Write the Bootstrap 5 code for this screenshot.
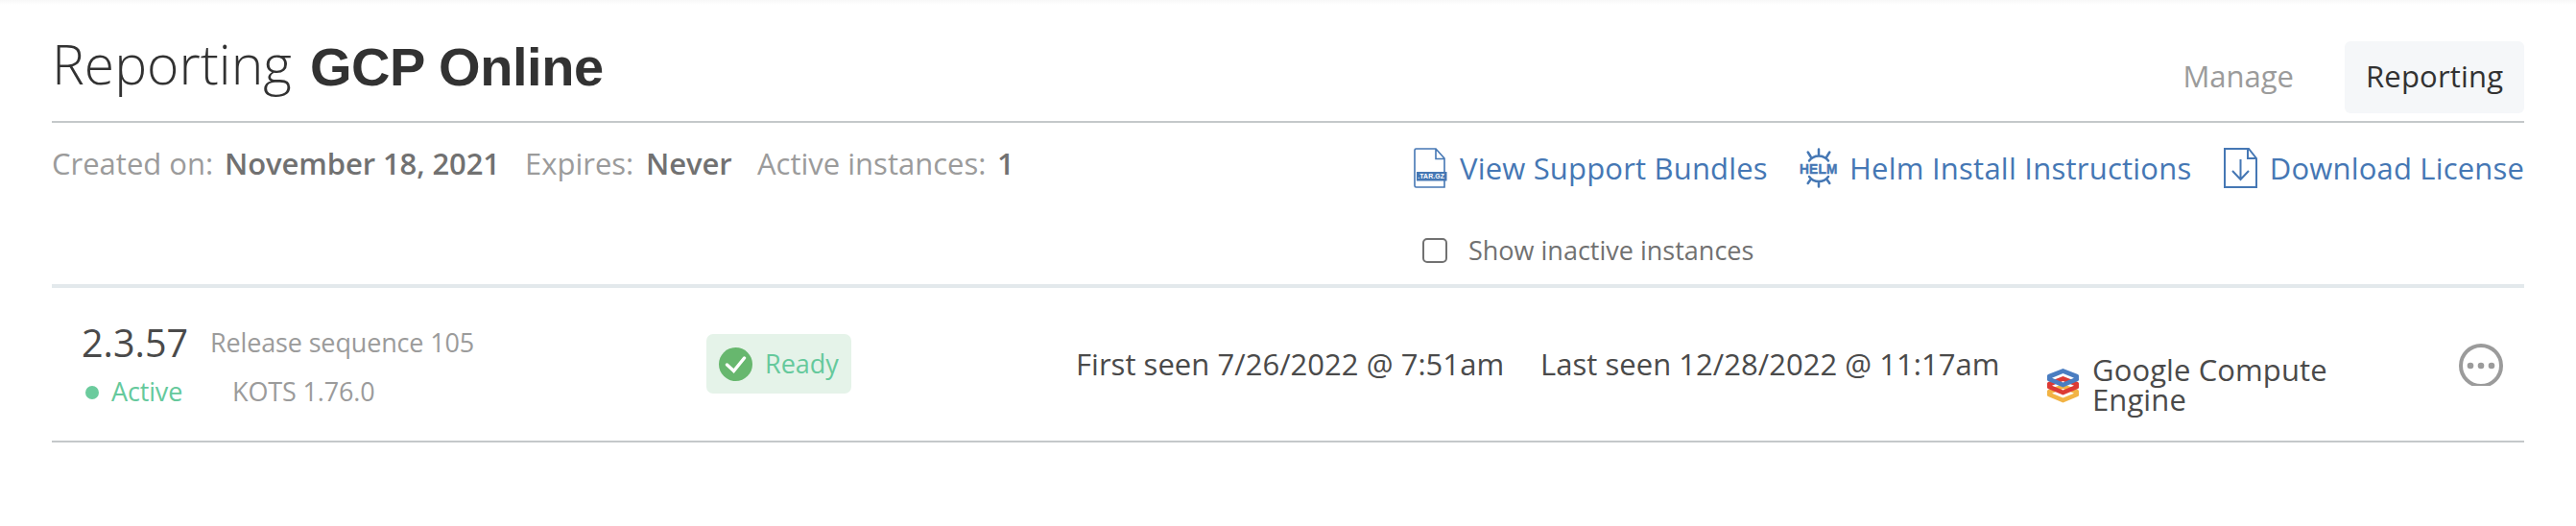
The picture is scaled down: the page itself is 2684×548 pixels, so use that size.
<!DOCTYPE html>
<html lang="en">
<head>
<meta charset="utf-8">
<title>Reporting GCP Online</title>
<link href="https://cdn.jsdelivr.net/npm/bootstrap@5.3.0/dist/css/bootstrap.min.css" rel="stylesheet">
<style>
body{font-family:"Open Sans","Noto Sans",sans-serif;font-size:31px;line-height:40px;color:#4a4a4a;background:#fff;white-space:nowrap}
.page{padding:0 54px;height:548px;background:linear-gradient(#f8f8f8,#fff 5px)}
.page svg{display:block;flex:none}
.top-bar{height:128px;border-bottom:2px solid #c4c8ca}
.title{font-size:57px;line-height:76px;color:#323232;margin:0}
.title-kind{font-weight:300;margin-top:28px;width:269px}
.title-name{font-family:"Liberation Sans",Arial,sans-serif;font-size:56px;font-weight:700;letter-spacing:-.45px;margin-top:32px}
.tabs{margin-top:43px;gap:53px}
.tab{height:75px;line-height:72px;color:#9b9b9b;text-decoration:none}
.tab.active{background:#f5f7f9;color:#323232;font-weight:500;border-radius:6px;width:187px;padding-left:22px;letter-spacing:.2px}
.sub-bar{height:172px;border-bottom:4px solid #e3e9ec}
.meta{display:grid;grid-template-columns:180px 313px 126px 116px 250px auto;margin-top:22px;color:#9b9b9b}
.meta b{font-weight:600;color:#717171;letter-spacing:-.1px}
.tools{width:1157px;margin-top:26px}
.tools a{color:#4577b4;text-decoration:none;font-weight:500;letter-spacing:.18px}
.view-link{width:402px}.tools .helm-link{width:442px;letter-spacing:.24px}
.view-link svg{margin-right:13px}.page .helm-link svg{margin-right:12px;overflow:visible}.dl-link svg{margin-right:13px}
.inactive{margin:45px 0 0 9px;font-size:27px;color:#717171}
.box{width:26px;height:26px;border:2px solid #717171;border-radius:5px;margin:0 22px 0 0}
.instance{height:161px;border-bottom:2px solid #c4c8ca;padding-left:31px}
.version{width:651px;font-size:27px;color:#9b9b9b;letter-spacing:-.15px}
.version .num{font-size:39.5px;line-height:54px;color:#4a4a4a;width:134px;letter-spacing:0}
.line-a{height:68px;padding-top:30px}
.seq{margin-top:7px}
.line-b{height:40px;margin-top:20px}
.state{color:#65c99c;width:157px}
.dot{width:14px;height:14px;border-radius:50%;background:#6bcb9d;margin:2px 13px 0 4px}
.ready{width:151px;height:62px;margin:48px 234px 0 0;border-radius:7px;background:#e5f3e9;color:#65c99c;font-size:27px;padding-left:13px}
.ready svg{margin-right:13px}
.seen{margin-top:59px;letter-spacing:.04px}
.first{width:484px}.last{width:528px}
.cloud{margin-top:70px;width:429px;line-height:31px;letter-spacing:.1px}
.cloud svg{margin:14px 14px 0 0}
.more{margin-top:58px}
</style>
</head>
<body>
<main class="page">
  <header class="top-bar d-flex justify-content-between align-items-start">
    <h1 class="title d-flex"><span class="title-kind">Reporting</span><span class="title-name">GCP Online</span></h1>
    <nav class="tabs d-flex"><a class="tab">Manage</a><a class="tab active">Reporting</a></nav>
  </header>
  <section class="sub-bar d-flex justify-content-between align-items-start">
    <div class="meta"><span>Created on:</span><b>November 18, 2021</b><span>Expires:</span><b>Never</b><span>Active instances:</span><b>1</b></div>
    <div class="tools">
      <div class="d-flex">
        <a class="view-link d-flex align-items-center"><svg width="35" height="42" viewBox="0 0 35 42"><path d="M1 2.5Q1 1 2.5 1H23l9 10v30H2.500Q1 41 1 39.500Z M23 1v10.500h9" fill="none" stroke="#4577b4" stroke-width="1.600"/><path d="M3 25h31.500v9.500H3z" fill="#4577b4"/><text x="4.200" y="32.300" font-family="Liberation Sans" font-weight="700" font-size="7.200" textLength="28" lengthAdjust="spacingAndGlyphs" fill="#fff">.TAR.GZ</text></svg>View Support Bundles</a>
        <a class="helm-link d-flex align-items-center"><svg width="40" height="42" viewBox="0 0 40 42" fill="none" stroke="#4577b4" stroke-width="2.500" stroke-linecap="round"><path d="M10 13.500a12.500 12.500 0 0 1 20 0M10 30a12.500 12.500 0 0 0 20 0M20 1.500v6M20 35.500v5M8.700 4.500l2.800 4.500M31.300 4.500l-2.800 4.500M8.700 37l2.800-4M31.300 37l-2.800-4"/><text x="0" y="27" stroke="#4577b4" stroke-width=".5" fill="#4577b4" font-family="Liberation Sans" font-weight="700" font-size="15.500" textLength="39.500" lengthAdjust="spacingAndGlyphs">HELM</text></svg>Helm Install Instructions</a>
        <a class="dl-link d-flex align-items-center"><svg width="35" height="42" viewBox="0 0 35 42" fill="none" stroke="#4577b4" stroke-width="2"><path d="M1 1h25l8 10v30H1zM25 1v10h9"/><path d="M17.500 12v21M9 24l8.500 9L26 24"/></svg>Download License</a>
      </div>
      <div class="inactive d-flex align-items-center"><span class="box"></span>Show inactive instances</div>
    </div>
  </section>
  <section class="instance d-flex align-items-start">
    <div class="version">
      <div class="line-a d-flex"><span class="num">2.3.57</span><span class="seq">Release sequence 105</span></div>
      <div class="line-b d-flex"><span class="state d-flex align-items-center"><i class="dot"></i>Active</span><span>KOTS 1.76.0</span></div>
    </div>
    <div class="ready d-flex align-items-center"><svg width="35" height="35" viewBox="0 0 35 35"><circle cx="17.500" cy="17.500" r="17.500" fill="#67b76e"/><path d="M8.500 18l7 6.500L26.500 11" fill="none" stroke="#fff" stroke-width="3.400" stroke-linecap="round"/></svg>Ready</div>
    <div class="seen first">First seen 7/26/2022 @ 7:51am</div>
    <div class="seen last">Last seen 12/28/2022 @ 11:17am</div>
    <div class="cloud d-flex align-items-start"><svg width="33" height="36" viewBox="0 0 33 36" fill-rule="evenodd"><defs><path id="layer" d="M16.500 0L32 6q1 .5 1 1.500v4q0 1-1 1.500l-15.500 6.500L1 13q-1-.5-1-1.500v-4Q0 6.500 1 6zM16.500 5L5 9.800l11.500 4.700L28 9.800z"/></defs><use href="#layer" y="16" fill="#f2b344"/><use href="#layer" y="8" fill="#dc3a34"/><use href="#layer" fill="#4a7dc1"/></svg><span>Google Compute<br>Engine</span></div>
    <svg class="more" width="46" height="44" viewBox="0 0 46 44"><circle cx="23" cy="23" r="21" fill="none" stroke="#9b9b9b" stroke-width="4"/><g fill="#9b9b9b"><circle cx="12" cy="23" r="3.300"/><circle cx="23" cy="23" r="3.300"/><circle cx="34" cy="23" r="3.300"/></g></svg>
  </section>
</main>
<script src="https://cdn.jsdelivr.net/npm/bootstrap@5.3.0/dist/js/bootstrap.bundle.min.js"></script>
</body>
</html>
